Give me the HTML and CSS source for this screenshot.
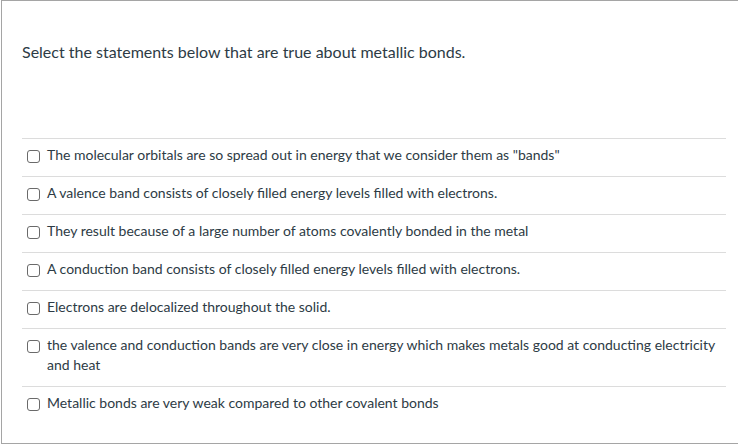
FILE: index.html
```html
<!DOCTYPE html>
<html>
<head>
<meta charset="utf-8">
<link rel="stylesheet" href="styles.css">
</head>
<body>
<div class="frame">
  <div class="question">Select the statements below that are true about metallic bonds.</div>
  <div class="answers">
    <label class="answer"><span class="box"></span><span class="text">The molecular orbitals are so spread out in energy that we consider them as "bands"</span></label>
    <label class="answer"><span class="box"></span><span class="text">A valence band consists of closely filled energy levels filled with electrons.</span></label>
    <label class="answer"><span class="box"></span><span class="text">They result because of a large number of atoms covalently bonded in the metal</span></label>
    <label class="answer"><span class="box"></span><span class="text">A conduction band consists of closely filled energy levels filled with electrons.</span></label>
    <label class="answer"><span class="box"></span><span class="text">Electrons are delocalized throughout the solid.</span></label>
    <label class="answer"><span class="box"></span><span class="text">the valence and conduction bands are very close in energy which makes metals good at conducting electricity and heat</span></label>
    <label class="answer"><span class="box"></span><span class="text">Metallic bonds are very weak compared to other covalent bonds</span></label>
  </div>
</div>
</body>
</html>
```
FILE: styles.css
```css
html, body {
  margin: 0;
  padding: 0;
  background: #ffffff;
  overflow: hidden;
}
body {
  font-family: Lato, "Open Sans", sans-serif;
  color: #2d3b45;
}
.frame {
  margin-left: 1px;
  width: 704px;
  height: 442px;
  border: 1px solid #a5a5a5;
  border-right: none;
  padding: 0 12px 0 20px;
}
.question {
  padding-top: 41px;
  font-size: 16px;
  line-height: 20px;
}
.answers {
  margin-top: 76px;
  width: 704px;
}
.answer {
  display: flex;
  align-items: flex-start;
  gap: 7px;
  border-top: 1px solid #dcdcdc;
  padding: 6px 0 11px 5px;
  font-size: 14px;
  line-height: 20px;
}
.box {
  flex: none;
  width: 11px;
  height: 11px;
  margin-top: 5px;
  border: 1px solid #6a6a6a;
  border-radius: 3px;
  background: #fff;
}
.text {
  flex: 1;
}
```
